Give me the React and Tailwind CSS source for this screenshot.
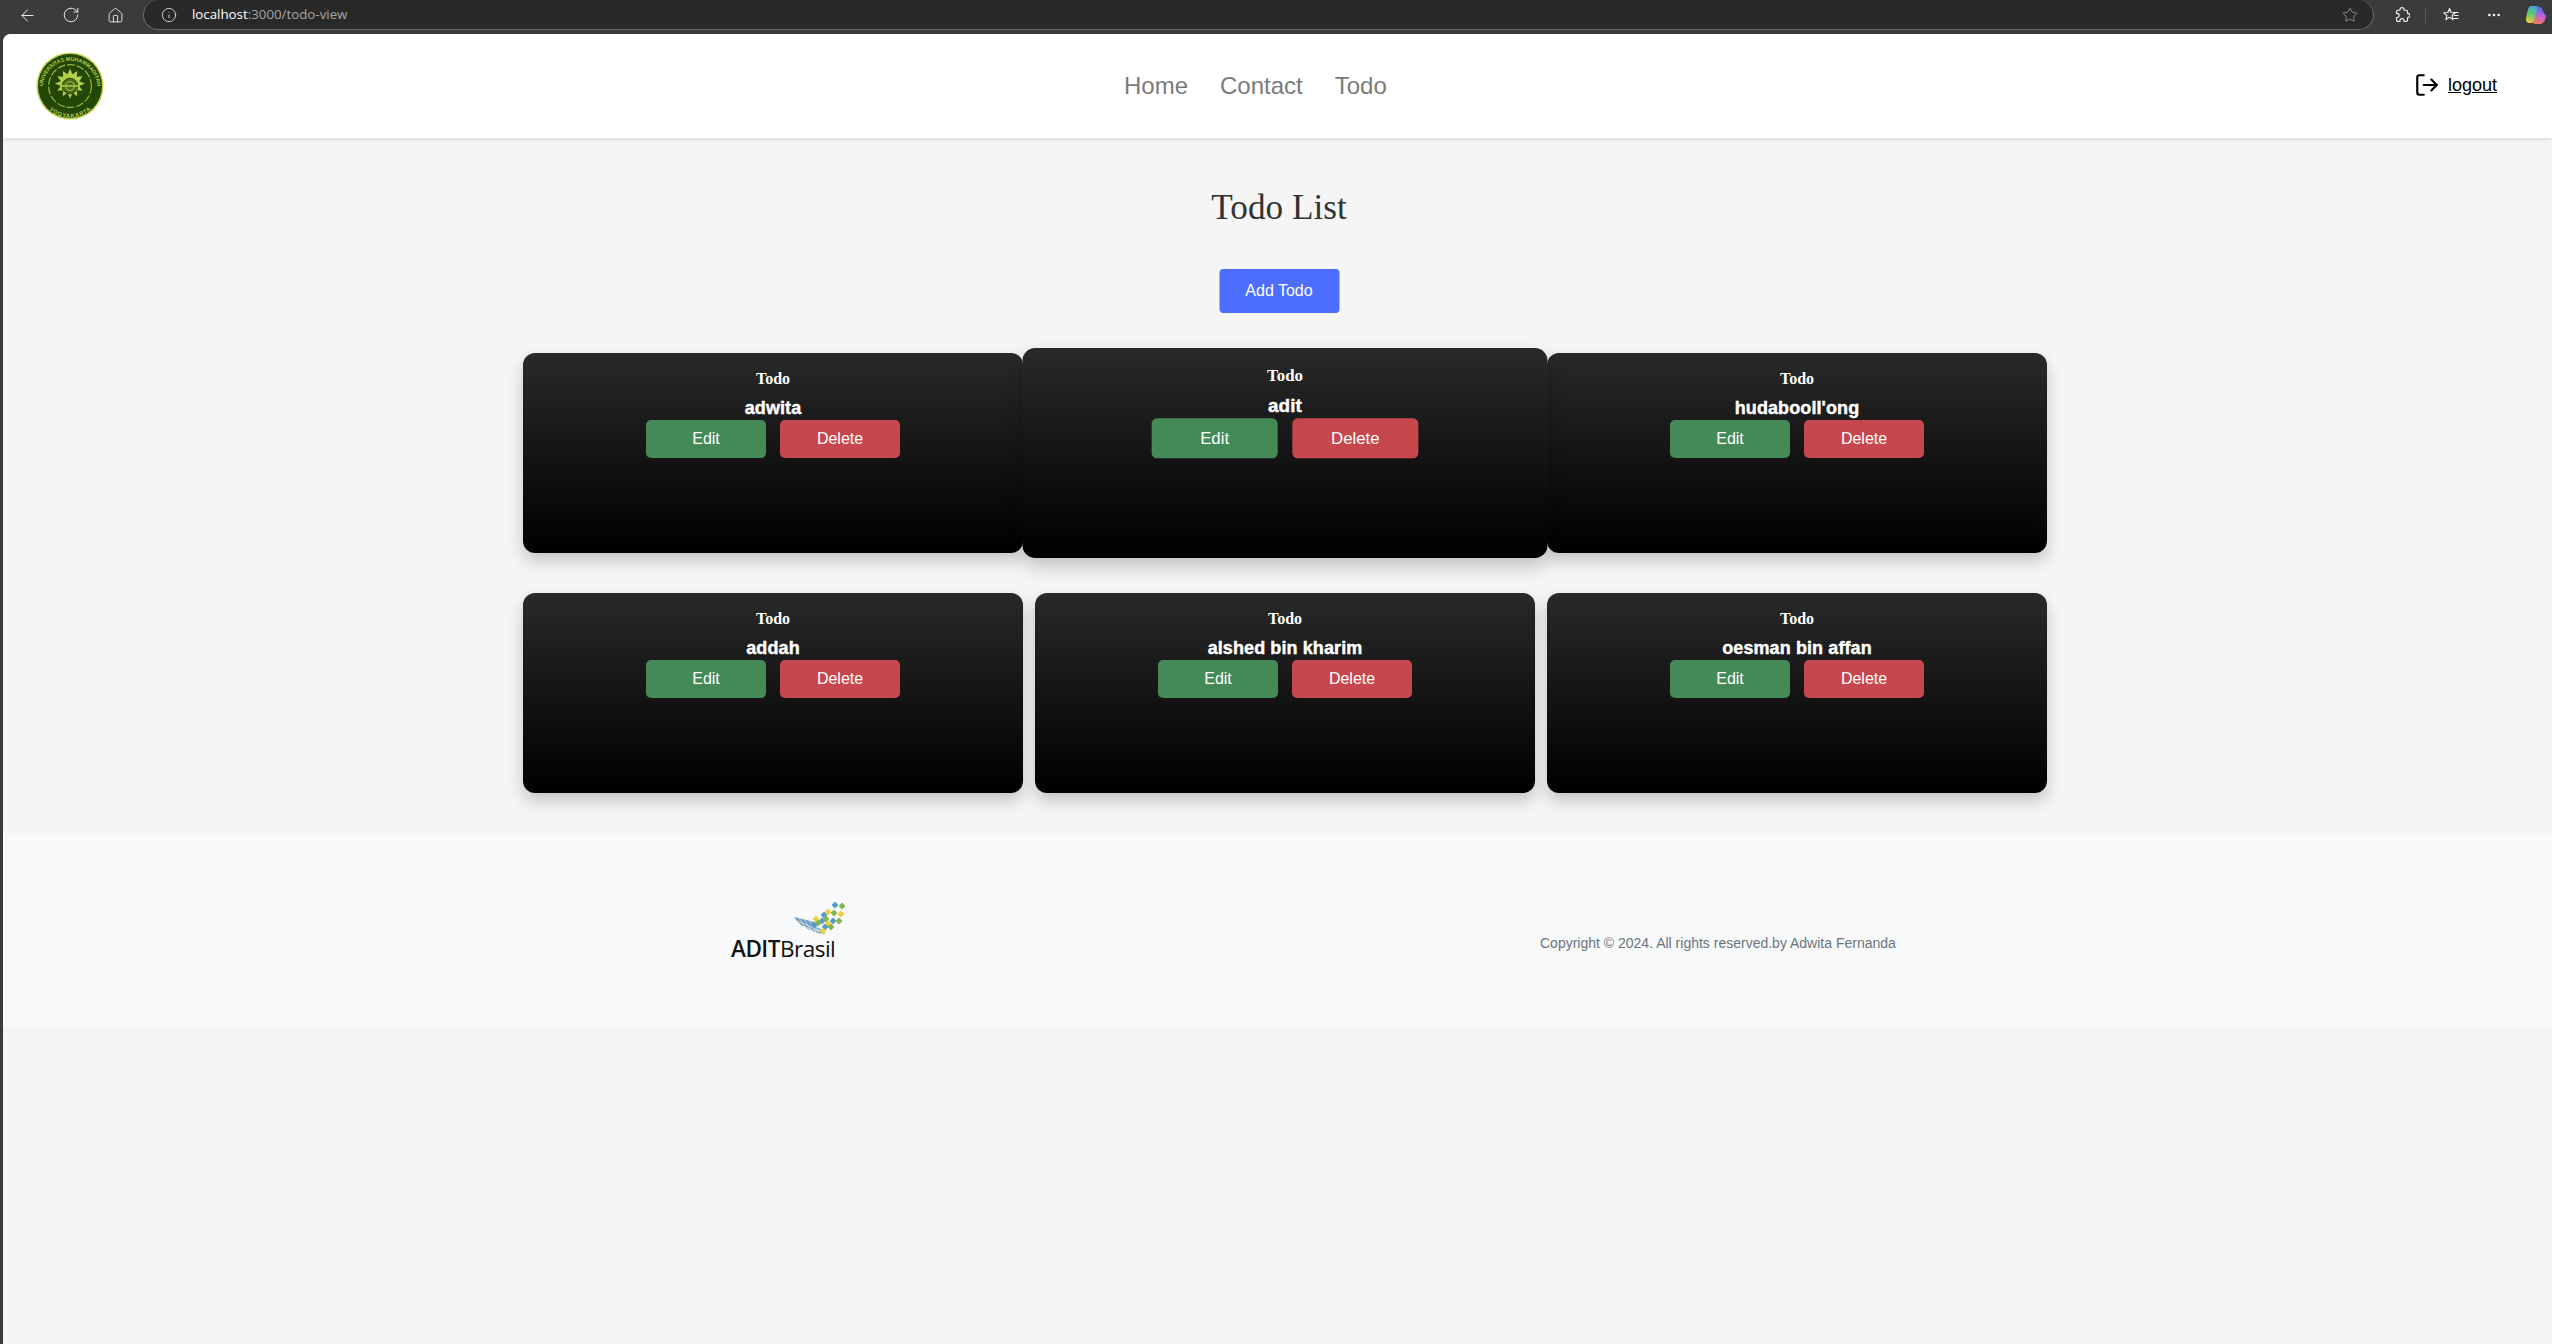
import { ArrowLeft, RotateCw, Home, Info, Star, Ellipsis, LogOut } from 'lucide-react';

const todos = [
  { name: 'adwita' },
  { name: 'adit', hovered: true },
  { name: "hudaboolI'ong" },
  { name: 'addah' },
  { name: 'alshed bin kharim' },
  { name: 'oesman bin affan' },
];

const diamonds = [
  [41, 3, '#5b9cc4'], [48, 4, '#7fb84e'], [30, 13, '#5b9cc4'], [34, 10, '#f2cf3f'], [40, 11, '#7fb84e'],
  [47, 12, '#f2cf3f'], [22, 17, '#f2cf3f'], [28, 19, '#5b9cc4'], [32, 17, '#7fb84e'], [39, 19, '#5b9cc4'],
  [45, 19, '#7fb84e'], [24, 21, '#7fb84e'], [20, 23, '#5b9cc4'], [34, 22, '#f2cf3f'], [31, 25, '#5b9cc4'],
  [37, 25, '#7fb84e'], [29, 29, '#f2cf3f'],
];

const CopilotLogo = () => (
  <svg width="22" height="22" viewBox="0 0 22 22">
    <defs>
      <linearGradient id="copilotA" x1="0.6" y1="0" x2="0.4" y2="1">
        <stop offset="0" stopColor="#3ba7e8" />
        <stop offset="0.5" stopColor="#5fc86a" />
        <stop offset="1" stopColor="#f5c63c" />
      </linearGradient>
      <linearGradient id="copilotB" x1="0.6" y1="0" x2="0.4" y2="1">
        <stop offset="0" stopColor="#4f6df0" />
        <stop offset="0.55" stopColor="#c85fd8" />
        <stop offset="1" stopColor="#f47a5a" />
      </linearGradient>
    </defs>
    <path d="M6 2h6c1 0 1.500.8 1.200 1.800L10 16c-.5 1.800-1.500 3-3.500 3H4c-2 0-3-1.500-3-3.500 0-2 .8-5 1.500-8C3.200 4.500 4 2 6 2z" fill="url(#copilotA)" />
    <path d="M10 3h4c2 0 3 1 3.500 3 .6 2 1.500 4 3 4.500.8 3-.5 8-4.500 9.500H10c-1.500 0-1.700-1-1.300-2L12 6c.3-1.500-.7-3-2-3z" fill="url(#copilotB)" />
  </svg>
);

const PuzzleIcon = () => (
  <svg width="16" height="16" viewBox="0 0 16 16" fill="none" stroke="#f0f0f0" strokeWidth="1.100" strokeLinejoin="round">
    <path d="M6 3.200V2.600a2 2 0 0 1 4 0v.6h2.300c.7 0 1.200.5 1.200 1.200v2h.4a2.100 2.100 0 0 1 0 4.200h-.4v2.600c0 .7-.5 1.200-1.200 1.200H10v-.8a2 2 0 0 0-4 0v.8H3.700c-.7 0-1.200-.5-1.200-1.200v-2.600h.6a2.100 2.100 0 0 0 0-4.200h-.6v-2c0-.7.5-1.200 1.200-1.200z" />
  </svg>
);

const FavoritesIcon = () => (
  <svg width="17" height="16" viewBox="0 0 17 16" fill="none" stroke="#f0f0f0" strokeWidth="1.100" strokeLinejoin="round">
    <path d="M6.500 1.500l1.600 4 4.200.3-3.200 2.700 1 4.100-3.600-2.300-3.600 2.300 1-4.100L.7 5.800l4.200-.3z" />
    <path d="M10.500 5.500h5M11 8.500h4.500M10.500 11.500h5" />
  </svg>
);

const BrowserBar = () => (
  <div className="flex h-[34px] shrink-0 items-center bg-[#3b3b3b]">
    <div className="flex w-[143px] -translate-y-[2px] items-center pl-[18px]">
      <ArrowLeft size={19} strokeWidth={1.25} color="#f0f0f0" />
      <RotateCw size={18} strokeWidth={1.25} color="#f0f0f0" className="ml-[25px]" />
      <Home size={17} strokeWidth={1.25} color="#f0f0f0" className="ml-[27px]" />
    </div>
    <div className="flex h-[30px] w-[2231px] -translate-y-[2px] items-center rounded-full border-b border-l border-r border-[#6a6a6a] bg-[#292929] pl-[17px] pr-[15px]">
      <Info size={16} strokeWidth={1.25} color="#e8e8e8" />
      <span className="ml-[15px] font-['Open_Sans',sans-serif] text-[13.3px] text-[#a5a5a5]">
        <span className="text-white">localhost</span>:3000/todo-view
      </span>
      <Star size={16} strokeWidth={1.100} color="#a8a8a8" className="ml-auto" />
    </div>
    <div className="flex flex-1 -translate-y-[2px] items-center pl-[20px]">
      <PuzzleIcon />
      <div className="ml-[15px] h-[16px] w-px bg-[#5c5c5c]" />
      <div className="ml-[17px]"><FavoritesIcon /></div>
      <Ellipsis size={16} color="#f0f0f0" className="ml-[26px]" />
      <div className="ml-[23px]"><CopilotLogo /></div>
    </div>
  </div>
);

const UniversitySeal = () => (
  <svg width="68" height="68" viewBox="0 0 70 70">
    <defs>
      <path id="sealTop" d="M7 37a28 28 0 0 1 56 0" />
      <path id="sealBottom" d="M11 50a28 28 0 0 0 48 0" />
    </defs>
    <circle cx="35" cy="35" r="34.500" fill="#c3d650" />
    <circle cx="35" cy="35" r="33" fill="#224706" />
    <text fontSize="5.500" fontWeight="700" fill="#b4cf4a" fontFamily="Liberation Sans, sans-serif">
      <textPath href="#sealTop" startOffset="50%" textAnchor="middle">UNIVERSITAS MUHAMMADIYAH</textPath>
    </text>
    <text fontSize="6" fontWeight="700" fill="#b4cf4a" fontFamily="Liberation Sans, sans-serif" dominantBaseline="hanging">
      <textPath href="#sealBottom" startOffset="50%" textAnchor="middle">YOGYAKARTA</textPath>
    </text>
    <circle cx="35" cy="35" r="22" fill="none" stroke="#9cb83c" strokeWidth="1.200" strokeDasharray="8 2" />
    <path d="M35 17l2.500 6 5-3.500-.5 6 6-.5-3.500 5 6 2.500-6 2.500 3.500 5-6-.5.5 6-5-3.500-2.500 6-2.500-6-5 3.500.5-6-6 .5 3.500-5-6-2.500 6-2.500-3.500-5 6 .5-.5-6 5 3.500z" fill="#b4cf4a" />
    <circle cx="35" cy="35" r="8" fill="#4c6d1c" stroke="#224706" strokeWidth="1" />
    <circle cx="35" cy="35" r="4.500" fill="none" stroke="#a8c244" strokeWidth="1" />
    <path d="M25 35h20" stroke="#b4cf4a" strokeWidth="1.500" />
  </svg>
);

const Navbar = () => (
  <nav className="relative z-10 flex h-[104px] shrink-0 items-center rounded-tl-lg bg-white pl-[33px] pr-[55px] shadow-[0_2px_4px_rgba(0,0,0,0.1)]">
    <UniversitySeal />
    <div className="ml-[1020px] flex gap-8 pb-[1px] text-2xl text-[#7b7b7b]">
      <span>Home</span>
      <span>Contact</span>
      <span>Todo</span>
    </div>
    <div className="ml-auto flex items-center gap-[8px] pb-[2px] text-lg text-black underline">
      <LogOut size={26} strokeWidth={2} />
      <span>logout</span>
    </div>
  </nav>
);

const TodoCard = ({ name, hovered }) => (
  <div className={`flex h-[200px] flex-col items-center rounded-xl bg-[linear-gradient(to_bottom,#292929,#000)] pt-[16px] text-white shadow-[0_8px_16px_rgba(0,0,0,0.2)] ${hovered ? 'z-10 scale-105' : ''}`}>
    <h3 className="font-['Liberation_Serif',serif] text-base font-bold leading-5">Todo</h3>
    <p className="mt-[9px] text-lg font-bold leading-5 tracking-[0.1px] [-webkit-text-stroke:0.4px_white]">{name}</p>
    <div className="mt-[2px] flex gap-[14px]">
      <button className="h-[38px] w-[120px] rounded-[5px] bg-[#448a57] text-base">Edit</button>
      <button className="h-[38px] w-[120px] rounded-[5px] bg-[#c6474d] text-base">Delete</button>
    </div>
  </div>
);

const AditLogo = () => (
  <div className="flex w-[115px] flex-col">
    <svg width="52" height="33" viewBox="0 0 52 33" className="self-end">
      <path d="M0 15c8 2 14 3 20 5l3 5 5 3 3 4c-10-1-24-6-31-17z" fill="#6d9fbe" />
      <path d="M4 19c8 4 16 7 24 11M9 24c7 3 13 5 20 6M5 16l8 12M10 17l8 13M15 18l7 12M20 20l5 10" stroke="#f8f9fa" strokeWidth="0.600" fill="none" />
      {diamonds.map(([x, y, color]) => (
        <rect key={`${x}-${y}`} x={x - 2.500} y={y - 2.500} width="5" height="5" rx="0.800" fill={color} transform={`rotate(45 ${x} ${y})`} />
      ))}
    </svg>
    <div className="mt-[2px] font-['Open_Sans',sans-serif] text-[22.5px] leading-6 tracking-[-0.5px] text-[#111]">
      <span className="font-semibold">ADIT</span>Brasil
    </div>
  </div>
);

const Footer = () => (
  <footer className="flex h-[194px] shrink-0 items-center bg-[#f8f9fa] pl-[728px]">
    <AditLogo />
    <p className="ml-[694px] mt-6 text-sm text-[#6c757d]">Copyright © 2024. All rights reserved.by Adwita Fernanda</p>
  </footer>
);

export default function App() {
  return (
    <div className="flex h-screen flex-col overflow-hidden bg-[#3b3b3b] font-['Liberation_Sans',Arial,sans-serif]">
      <BrowserBar />
      <div className="ml-[3px] flex flex-1 flex-col rounded-tl-lg bg-[#f5f5f5]">
        <Navbar />
        <main className="flex flex-col pt-[50px]">
          <h1 className="pl-[3px] text-center font-['Liberation_Serif',serif] text-[35.2px] font-normal leading-10 text-[#333]">Todo List</h1>
          <button className="mx-auto mt-[41px] h-[44px] w-[120px] translate-x-[1.5px] rounded bg-[#4d6dff] text-base text-white">Add Todo</button>
          <div className="ml-[520px] mt-[40px] grid w-[1524px] grid-cols-3 gap-x-3 gap-y-10">
            {todos.map((todo) => (
              <TodoCard key={todo.name} {...todo} />
            ))}
          </div>
        </main>
        <div className="mt-[41px]">
          <Footer />
        </div>
      </div>
    </div>
  );
}
